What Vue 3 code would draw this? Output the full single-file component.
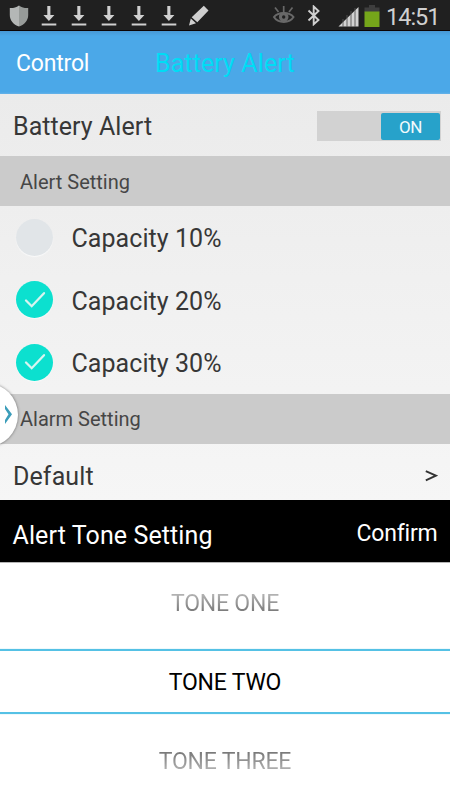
<script setup>
import { ref } from 'vue'

const enabled = ref(true)
const capacities = ref([
  { label: 'Capacity 10%', checked: false },
  { label: 'Capacity 20%', checked: true },
  { label: 'Capacity 30%', checked: true },
])
const downloads = [1, 2, 3, 4, 5]
</script>

<template>
  <main class="screen">
    <div class="status">
      <svg class="shield" width="20" height="22" viewBox="0 0 20 22">
        <path d="M10 .5C7 2.600 4 3.200 .8 3v7c0 5.500 3.500 9.500 9.200 11.500z" fill="#b4b7b6" />
        <path d="M10 .5c3 2.100 6 2.700 9.200 2.500v7c0 5.500-3.500 9.500-9.200 11.500z" fill="#979b99" />
      </svg>
      <svg v-for="n in downloads" :key="n" class="download" width="16" height="22" viewBox="0 0 16 22">
        <path d="M6.300 1h3.100v9h4L7.900 16 2.400 10h3.900z" fill="#d0d0d0" />
        <path d="M.7 18.500h14.600v2H.7z" fill="#d0d0d0" />
      </svg>
      <svg class="pencil" width="22" height="22" viewBox="0 0 22 22">
        <path d="M15.800.8l4.700 4.700L9.300 17.300 3.700 12.300zM2.800 13.500l5.200 4.700L1 20.500z" fill="#cfcfcf" />
      </svg>
      <span class="spacer"></span>
      <svg class="eye" width="24" height="20" viewBox="0 0 24 20">
        <path d="M2 12C6 6.500 17.500 6.500 21.500 12 17.500 18.500 6 18.500 2 12z" fill="none" stroke="#686868" stroke-width="2" />
        <circle cx="11.700" cy="12" r="4.800" fill="#686868" />
        <circle cx="11.700" cy="12" r="1.700" fill="#202020" />
        <path d="M11.700 1v9M3 2.500l3.500 4.500M20.500 2.500L17 7" stroke="#686868" stroke-width="1.700" />
      </svg>
      <svg class="bluetooth" width="14" height="21" viewBox="0 0 14 21">
        <path d="M1.500 5.500l10 9.500-4.800 4.300V1.500L11.500 6l-10 9.500" fill="none" stroke="#d0d0d0" stroke-width="1.900" />
      </svg>
      <svg class="signal" width="21" height="20" viewBox="0 0 21 20">
        <path d="M20.500 0v19.500H.5z" fill="#d2d2d2" />
        <path d="M5 12v8M9 8v12M13 4v16M17 1v19" stroke="#555" stroke-width=".9" />
      </svg>
      <svg class="battery" width="16" height="24" viewBox="0 0 16 24">
        <path d="M5 1h6v2.500h4.500V8H.5V3.500H5z" fill="#3e3e3e" />
        <path d="M.5 7.500h15V23H.5z" fill="#75a61a" />
      </svg>
      <span class="clock">14:51</span>
    </div>

    <header class="header">
      <span class="back">Control</span>
      <h1 class="title">Battery Alert</h1>
    </header>

    <section class="settings">
      <div class="row alert-row">
        <span class="label">Battery Alert</span>
        <button class="switch" :class="{ off: !enabled }" @click="enabled = !enabled">
          <span class="thumb">{{ enabled ? 'ON' : 'OFF' }}</span>
        </button>
      </div>
      <h2 class="section">Alert Setting</h2>
      <div v-for="item in capacities" :key="item.label" class="row capacity" @click="item.checked = !item.checked">
        <span class="check" :class="{ checked: item.checked }">
          <svg v-if="item.checked" width="22" height="18" viewBox="0 0 22 18">
            <path d="M2 9.500l5.700 5.700L20 2.200" fill="none" stroke="#d8f5f0" stroke-width="2.300" stroke-linecap="round" />
          </svg>
        </span>
        <span class="label">{{ item.label }}</span>
      </div>
      <h2 class="section alarm">Alarm Setting</h2>
      <div class="row default">
        <span class="label">Default</span>
        <svg width="13" height="12" viewBox="0 0 13 12">
          <path d="M.8 1.200L11 5.700.8 10.400" fill="none" stroke="#333" stroke-width="1.900" />
        </svg>
      </div>
      <div class="drawer">
        <svg width="10" height="22" viewBox="0 0 10 22">
          <path d="M2 1L9 10.300 2 20V16L5.500 10.300 2 5z" fill="#3b9dba" />
        </svg>
      </div>
    </section>

    <section class="sheet">
      <div class="sheet-head">
        <h2 class="sheet-title">Alert Tone Setting</h2>
        <span class="confirm">Confirm</span>
      </div>
      <div class="picker">
        <div class="tone first">TONE ONE</div>
        <div class="tone selected">TONE TWO</div>
        <div class="tone last">TONE THREE</div>
      </div>
    </section>
  </main>
</template>

<style>
body {
  margin: 0;
  background: #fff;
}
</style>

<style scoped>
.screen {
  width: 450px;
  height: 800px;
  overflow: hidden;
  display: flex;
  flex-direction: column;
  font-family: Roboto, sans-serif;
  color: #373737;
}
h1,
h2 {
  margin: 0;
  font-weight: 400;
}
svg {
  display: block;
  flex: none;
}
.status {
  box-sizing: border-box;
  height: 31px;
  flex: none;
  background: #202020;
  border-bottom: 1px solid #0b0303;
  display: flex;
  align-items: flex-start;
  padding: 5px 11px 0 9px;
}
.shield {
  margin-right: 12px;
}
.download {
  margin-right: 14px;
}
.pencil {
  margin-left: -3px;
}
.spacer {
  flex: 1;
}
.eye {
  margin-right: 11px;
}
.bluetooth {
  margin-right: 17px;
}
.signal {
  margin: 2px 5px 0 0;
}
.battery {
  margin: -1px 6px 0 0;
}
.clock {
  width: 53px;
  font-size: 23.500px;
  line-height: 24px;
  letter-spacing: -1px;
  color: #d0d0d0;
  white-space: nowrap;
}
.header {
  box-sizing: border-box;
  height: 63px;
  flex: none;
  background: linear-gradient(#4797d4 0, #4ba8e8 5px, #4ba8e8 61px, #67b3e8 63px);
  display: flex;
  align-items: center;
  padding: 2px 0 0 16px;
}
.back {
  width: 139px;
  font-size: 23px;
  letter-spacing: -0.200px;
  color: #fff;
}
.title {
  font-size: 25px;
  letter-spacing: 0.100px;
  color: #00dcf5;
}
.settings {
  position: relative;
  height: 406px;
  flex: none;
  background: linear-gradient(#ebebeb, #f6f6f6);
}
.row {
  box-sizing: border-box;
  display: flex;
  align-items: center;
}
.label {
  font-size: 25px;
  letter-spacing: 0.060px;
}
.alert-row {
  height: 62px;
  padding: 2px 9px 0 13px;
  justify-content: space-between;
}
.switch {
  box-sizing: border-box;
  width: 124px;
  height: 30px;
  border: 0;
  padding: 2px 1px 1px;
  display: flex;
  justify-content: flex-end;
  background: #d2d2d2;
  font: inherit;
}
.switch.off {
  justify-content: flex-start;
}
.thumb {
  width: 59px;
  height: 27px;
  border-radius: 2px;
  background: #27a2ca;
  color: #f2fafc;
  font-size: 17px;
  line-height: 28px;
  letter-spacing: -0.400px;
  text-align: center;
}
.off .thumb {
  background: #a3a3a3;
}
.section {
  box-sizing: border-box;
  height: 50px;
  background: #cbcbcb;
  color: #464646;
  padding: 2px 0 0 20px;
  font-size: 20px;
  line-height: 48px;
}
.alarm {
  padding-top: 1px;
}
.capacity {
  height: 62.500px;
  padding-left: 16px;
}
.capacity .label {
  padding-top: 3px;
}
.check {
  width: 37px;
  height: 37px;
  margin-right: 18.500px;
  border-radius: 50%;
  background: #e1e5e8;
  box-shadow: 0 1px 1px #fafafa;
  display: flex;
  align-items: center;
  justify-content: center;
}
.checked {
  background: #0ce0cf;
}
.default {
  height: 56px;
  padding: 9px 12px 0 13px;
  justify-content: space-between;
}
.default .label {
  letter-spacing: 0.100px;
}
.drawer {
  position: absolute;
  left: -46px;
  top: 289px;
  width: 64px;
  height: 64px;
  border-radius: 50%;
  background: #fff;
  box-shadow: 0 0 3px rgba(0, 0, 0, 0.5);
  display: flex;
  align-items: center;
  justify-content: flex-end;
}
.drawer svg {
  margin-right: 5px;
}
.sheet-head {
  box-sizing: border-box;
  height: 62px;
  background: #000;
  color: #fff;
  display: flex;
  justify-content: space-between;
  align-items: center;
  padding: 0 12.500px;
}
.sheet-title {
  font-size: 25px;
  letter-spacing: 0.100px;
  padding-top: 8px;
}
.confirm {
  font-size: 23px;
  letter-spacing: -0.200px;
  padding-top: 4px;
}
.picker {
  box-sizing: border-box;
  height: 238px;
  background: #fff;
  border-top: 1px solid #b5b5b5;
}
.tone {
  box-sizing: border-box;
  font-size: 23px;
  letter-spacing: -0.200px;
  text-align: center;
  color: transparent;
  background-clip: text;
}
.first {
  height: 86px;
  line-height: 82px;
  background-image: linear-gradient(#bdbdbd 28px, #6f6f6f 52px);
}
.selected {
  height: 65px;
  line-height: 63px;
  border-top: 2px solid #55c1e5;
  border-bottom: 2px solid #55c1e5;
  box-shadow: 0 0 1px #9bdcec;
  color: #000;
}
.last {
  height: 86px;
  line-height: 96px;
  background-image: linear-gradient(#6f6f6f 35px, #bdbdbd 60px);
}
</style>
